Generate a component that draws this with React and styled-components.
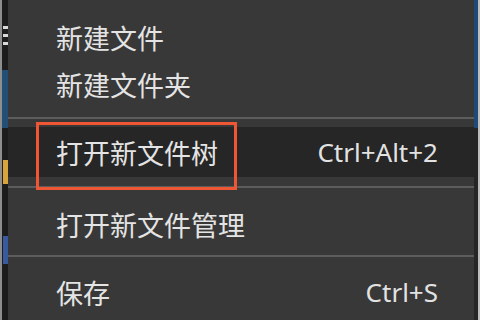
import React from "react";
import styled, { createGlobalStyle } from "styled-components";

const GlobalStyle = createGlobalStyle`
  html, body {
    margin: 0;
    padding: 0;
    background: #1c1c1c;
    overflow: hidden;
  }
`;

const Screen = styled.div`
  display: flex;
  width: 480px;
  height: 320px;
  overflow: hidden;
`;

const LeftStrip = styled.div`
  display: flex;
  flex-direction: column;
  width: 8px;
  border-left: 2px solid #8e8e8e;
  background: #1d1d1d;
  box-sizing: border-box;
`;

const StripBlock = styled.div`
  height: ${(p) => p.$h}px;
  margin-left: ${(p) => p.$left || 0}px;
  background: ${(p) => p.$color || "transparent"};
  flex-shrink: 0;
`;

const RightStrip = styled.div`
  display: flex;
  flex-direction: column;
  width: 6px;
  border-right: 2px solid #bdbdbd;
  background: #262626;
  box-sizing: border-box;
`;

const Menu = styled.div`
  flex: 1;
  display: flex;
  flex-direction: column;
  padding-top: 14px;
  background: #383838;
  font-family: "Noto Sans CJK SC", "Noto Sans", sans-serif;
  color: #e4e4e4;
`;

const Row = styled.div`
  position: relative;
  display: flex;
  align-items: center;
  justify-content: space-between;
  height: ${(p) => p.$h || 47}px;
  padding: ${(p) => p.$shift || 0}px 36px 0 48px;
  box-sizing: border-box;
  flex-shrink: 0;
  background: ${(p) => (p.$active ? "#262626" : "transparent")};
`;

const Label = styled.span`
  font-size: 27px;
  line-height: 1;
  white-space: nowrap;
`;

const Shortcut = styled.span`
  font-family: "Noto Sans", "Open Sans", sans-serif;
  font-size: 26px;
  line-height: 1;
  color: #e2e2e2;
  white-space: nowrap;
`;

const Separator = styled.div`
  height: 2px;
  margin: 9px 0 8px;
  background: #5c5c5c;
  flex-shrink: 0;
`;

const Callout = styled.div`
  position: absolute;
  left: 28px;
  top: -5px;
  width: 201px;
  height: 68px;
  border: 3px solid #ee5634;
  box-sizing: border-box;
  pointer-events: none;
  z-index: 2;
`;

export default function App() {
  return (
    <>
      <GlobalStyle />
      <Screen>
        <LeftStrip>
          <StripBlock $h={26} />
          <StripBlock $h={3} $left={1} $color="#d8d8d8" />
          <StripBlock $h={5} />
          <StripBlock $h={3} $left={1} $color="#d8d8d8" />
          <StripBlock $h={5} />
          <StripBlock $h={3} $left={1} $color="#d8d8d8" />
          <StripBlock $h={25} />
          <StripBlock $h={58} $color="#234e76" />
          <StripBlock $h={32} />
          <StripBlock $h={24} $left={1} $color="#d9a43a" />
          <StripBlock $h={52} />
          <StripBlock $h={28} $left={1} $color="#3a5aa0" />
        </LeftStrip>
        <Menu>
          <Row>
            <Label>新建文件</Label>
          </Row>
          <Row>
            <Label>新建文件夹</Label>
          </Row>
          <Separator />
          <Row $h={50} $active>
            <Callout />
            <Label>打开新文件树</Label>
            <Shortcut>Ctrl+Alt+2</Shortcut>
          </Row>
          <Separator />
          <Row $h={50} $shift={6}>
            <Label>打开新文件管理</Label>
          </Row>
          <Separator />
          <Row $h={50} $shift={4}>
            <Label>保存</Label>
            <Shortcut>Ctrl+S</Shortcut>
          </Row>
        </Menu>
        <RightStrip>
          <StripBlock $h={128} $color="#1f4a78" />
        </RightStrip>
      </Screen>
    </>
  );
}
